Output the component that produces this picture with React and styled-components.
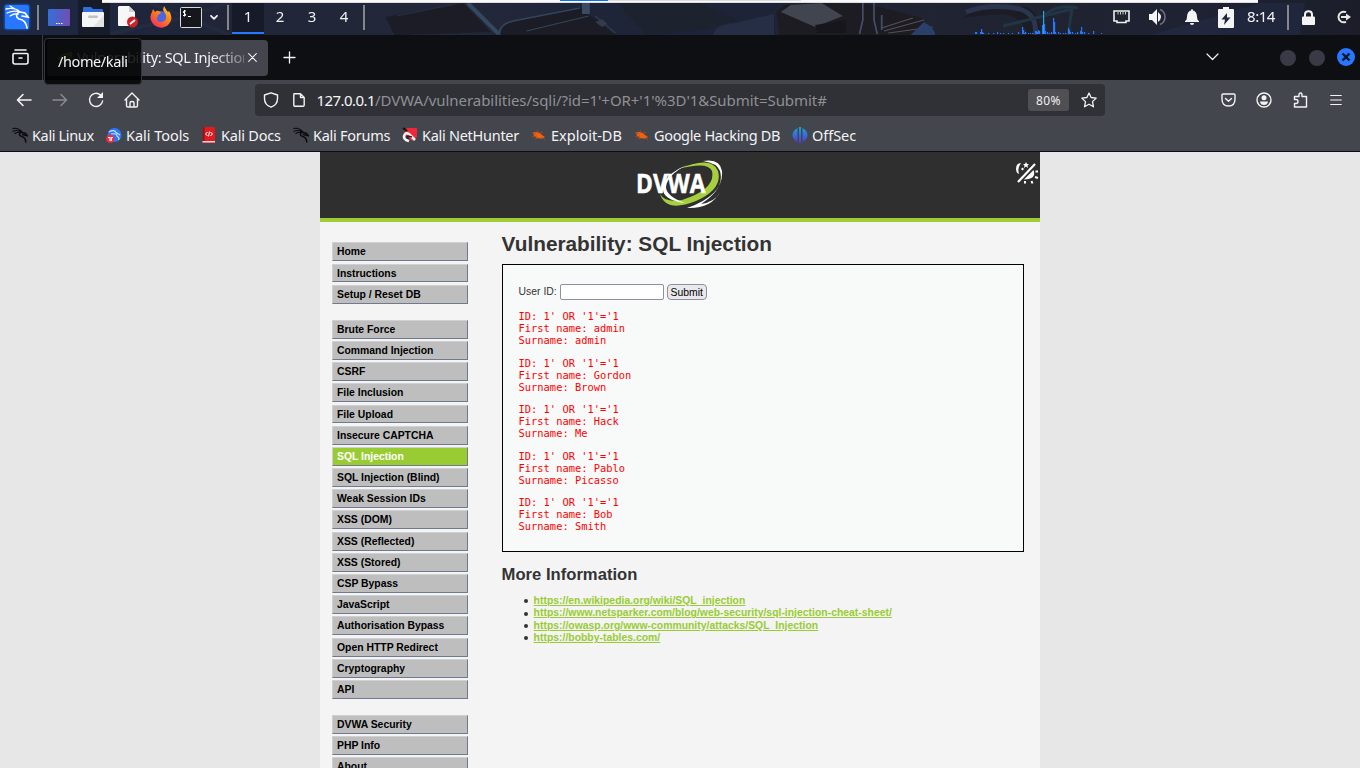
import React from "react";
import styled, { createGlobalStyle } from "styled-components";

const Global = createGlobalStyle`
  * { box-sizing: border-box; }
  html, body { margin: 0; padding: 0; overflow: hidden; background: #e7e7e7; }
  svg { display: block; flex: none; }
`;

const Desktop = styled.div`
  width: 1360px;
  height: 768px;
  overflow: hidden;
  display: flex;
  flex-direction: column;
  font-family: "Noto Sans", sans-serif;
  color: #f3f3f5;
`;

/* ---------- desktop panel ---------- */
const Panel = styled.header`
  position: relative;
  height: 35px;
  flex: none;
  display: flex;
  align-items: center;
  background: #1f2230;
`;
const Wallpaper = styled.svg`
  position: absolute;
  inset: 0;
`;
const Behind = styled.div`
  position: absolute;
  z-index: 2;
  left: 102px;
  top: 0;
  width: 1156px;
  height: 3px;
  background: #fafafa;
  border-bottom: 1px solid #dcdcde;
  display: flex;
  padding-left: 458px;
`;
const Loading = styled.div`
  width: ${(p) => p.$w}px;
  height: 1px;
  background: ${(p) => p.$c};
`;
const Launchers = styled.div`
  position: relative;
  display: flex;
  align-items: center;
  width: 366px;
  height: 35px;
`;
const Launcher = styled.div`
  width: ${(p) => p.$w}px;
  height: 35px;
  display: flex;
  align-items: center;
  justify-content: center;
  background: ${(p) => p.$bg || "transparent"};
`;
const ArrowSlot = styled(Launcher)`
  padding-right: 5px;
`;
const Divider = styled.div`
  width: 2px;
  height: 25px;
  background: #85868b;
`;
const Workspace = styled.div`
  width: 32px;
  height: 35px;
  padding-bottom: 3px;
  display: flex;
  align-items: center;
  justify-content: center;
  font-size: 15px;
  color: #f0f0f2;
  background: ${(p) => (p.$on ? "#171b29" : "transparent")};
  box-shadow: ${(p) => (p.$on ? "inset 0 -1px #171b29, inset 0 -3px #2777ff" : "none")};
`;
const Tray = styled.div`
  position: relative;
  margin-left: auto;
  width: 256px;
  height: 35px;
  display: flex;
  align-items: center;
`;
const TrayIcon = styled.div`
  width: ${(p) => p.$w}px;
  display: flex;
  justify-content: center;
`;
const Clock = styled.div`
  width: 42px;
  padding-right: 6px;
  text-align: center;
  font-size: 15px;
  line-height: 33px;
  margin-top: -2px;
  letter-spacing: -0.5px;
`;

/* ---------- browser ---------- */
const TabStrip = styled.div`
  position: relative;
  height: 45px;
  flex: none;
  display: flex;
  align-items: center;
  background: #0e0f13;
`;
const ViewButton = styled.div`
  width: 43px;
  height: 45px;
  display: flex;
  align-items: center;
  justify-content: center;
  padding-right: 2px;
  padding-bottom: 1px;
  border-right: 1px solid #3b3c40;
`;
const Tab = styled.div`
  margin-left: 4px;
  width: 221px;
  height: 36px;
  border-radius: 4px;
  background: #44464e;
  display: flex;
  align-items: center;
  padding-left: 10px;
  font-size: 14.5px;
`;
const TabTitle = styled.div`
  width: 167px;
  margin-left: 4px;
  margin-top: -1px;
  white-space: nowrap;
  overflow: hidden;
  letter-spacing: -0.33px;
  mask-image: linear-gradient(90deg, #000 80%, rgba(0, 0, 0, 0.3));
`;
const NewTab = styled.div`
  margin-left: 15px;
`;
const WindowControls = styled.div`
  margin-left: auto;
  display: flex;
  align-items: center;
  padding-right: 5px;
`;
const Round = styled.div`
  width: 16px;
  height: 16px;
  margin-right: 13px;
  border-radius: 50%;
  background: #383b46;
`;
const Tooltip = styled.div`
  position: absolute;
  left: 44px;
  top: 3px;
  width: 98px;
  height: 47px;
  z-index: 3;
  border: 1px solid #34353a;
  border-radius: 4px;
  background: rgba(2, 2, 3, 0.86);
  padding-left: 13px;
  line-height: 45px;
  font-size: 14.5px;
  letter-spacing: -0.4px;
`;
const NavBar = styled.div`
  height: 40px;
  flex: none;
  display: flex;
  align-items: center;
  background: #44464e;
`;
const NavIcon = styled.div`
  width: 36px;
  display: flex;
  align-items: center;
  height: 18px;
  justify-content: center;
  opacity: ${(p) => (p.$dim ? 0.4 : 1)};
`;
const NavGroup = styled.div`
  display: flex;
  padding-left: 6px;
  width: 255px;
`;
const UrlBar = styled.div`
  width: 850px;
  height: 32px;
  border-radius: 4px;
  background: #303136;
  display: flex;
  align-items: center;
  padding: 0 8px;
`;
const Url = styled.div`
  margin-left: 11.5px;
  flex: 1;
  font-size: 15px;
  line-height: 32px;
  white-space: nowrap;
  color: #8f9094;
  letter-spacing: -0.05px;
`;
const Host = styled.span`
  color: #f6f6f7;
  letter-spacing: -0.55px;
`;
const Zoom = styled.div`
  width: 41px;
  height: 22px;
  margin-right: 12px;
  border-radius: 3px;
  background: #504f54;
  text-align: center;
  font-size: 12px;
  letter-spacing: 0.4px;
  line-height: 23px;
  color: #f0f0f1;
`;
const MenuGroup = styled.div`
  margin-left: auto;
  padding-right: 6px;
  display: flex;
`;
const Bookmarks = styled.div`
  height: 32px;
  flex: none;
  padding-left: 12px;
  display: flex;
  align-items: center;
  background: #44464e;
  border-bottom: 1px solid #0d0e12;
`;
const Bookmark = styled.div`
  width: ${(p) => p.$w}px;
  display: flex;
  align-items: center;
  gap: 4px;
  font-size: 14.5px;
  line-height: 28px;
  padding-bottom: 1.5px;
  white-space: nowrap;
  letter-spacing: ${(p) => p.$ls}px;
`;

/* ---------- web page ---------- */
const Viewport = styled.main`
  height: 616px;
  flex: none;
  overflow: hidden;
  background: #e7e7e7;
  font-family: "Liberation Sans", Arial, sans-serif;
  font-size: 10.4px;
  color: #333;
`;
const Page = styled.div`
  width: 720px;
  height: 700px;
  margin: 0 auto;
  background: #f4f4f4;
`;
const Banner = styled.div`
  height: 70px;
  background: #2f2f2f;
  border-bottom: 4px solid #a1cc33;
  display: flex;
  justify-content: flex-end;
  align-items: flex-start;
`;
const Logo = styled.svg`
  margin: 6px 291px 0 0;
`;
const ThemeIcon = styled.svg`
  margin: 9px 1px 0 0;
`;
const Columns = styled.div`
  display: flex;
  padding-left: 12px;
`;
const Side = styled.nav`
  width: 136px;
  padding-top: 20.4px;
`;
const MenuBlock = styled.div`
  margin-bottom: 16.15px;
`;
const MenuItem = styled.div`
  height: 18.9px;
  margin-bottom: 2.3px;
  padding-left: 4px;
  border: 1px solid;
  border-color: #d0d0d0 #6f7990 #6f7990 #d0d0d0;
  background: ${(p) => (p.$on ? "#99cc33" : "#bebebe")};
  color: ${(p) => (p.$on ? "#fff" : "#000")};
  font-weight: bold;
  font-size: 10.4px;
  line-height: 17px;
`;
const Content = styled.section`
  margin-left: 33.6px;
  width: 522px;
`;
const H1 = styled.h1`
  margin: 10px 0 8px;
  font-size: 20.8px;
  line-height: 24px;
`;
const H2 = styled.h2`
  margin: 13px 0 10px;
  font-size: 16.64px;
  line-height: 20px;
`;
const VulnBox = styled.div`
  height: 288px;
  border: 1px solid #000;
  background: #f8fafa;
  padding: 19px 16px 0;
`;
const Form = styled.form`
  display: flex;
  align-items: center;
  height: 16px;
  margin-bottom: 10px;
`;
const Label = styled.label`
  line-height: 12px;
  padding-bottom: 1px;
`;
const Input = styled.input`
  width: 104px;
  height: 16px;
  margin: 0 3px;
  padding: 0;
  border: 1px solid #8f8f9d;
  border-radius: 2px;
  background: #fff;
`;
const Submit = styled.button`
  width: 40px;
  height: 16px;
  padding: 1px 0 0;
  border: 1px solid #8f8f9d;
  border-radius: 4px;
  background: #e9e9ed;
  color: #000;
  font: 10.4px/13px "Liberation Sans", Arial, sans-serif;
`;
const Result = styled.pre`
  margin: 0 0 10.4px;
  font: 10.4px/12.07px "DejaVu Sans Mono", monospace;
  color: #f00;
`;
const Links = styled.ul`
  margin: 0;
  padding-left: 22.5px;
  list-style: none;
`;
const LinkRow = styled.li`
  display: flex;
  align-items: center;
  gap: 5.5px;
  line-height: 12.4px;
  &::before {
    content: "";
    width: 4px;
    height: 4px;
    border-radius: 50%;
    background: #333;
  }
`;
const Link = styled.a`
  color: #99cc33;
  font-weight: bold;
  text-decoration: underline;
  letter-spacing: 0.01px;
`;

const Dragon = ({ size = 16, color = "#0b0b0d" }) => (
  <svg width={size} height={size} viewBox="0 0 16 16" fill="none" stroke={color} strokeLinecap="round">
    <path d="M.8 1.500C4 .8 7.500 2 9.600 4.600M.8 4.200C4.500 3 7.600 3.700 9.700 5.200M2.800 6.500C5.500 4.800 7.500 5 9 5.600" strokeWidth="1.100" />
    <path d="M9.600 5C6.500 6 6.600 8.800 9.600 9.400C12.300 9.900 13.500 11.300 13.800 15" strokeWidth="1.500" />
    <path d="M9.400 5.200L13.200 6.200L15.500 8.800L12.400 8L10.400 7.500" strokeWidth="1.500" />
  </svg>
);

const Spark = () => {
  const bars = [[975,2],[976,2],[980,2],[981,5],[982,2],[983,1],[988,1],[993,1],[997,2],[1000,1],[1003,1],[1008,1],[1012,1],[1018,2],[1022,7],[1023,4],[1024,1],[1025,2],[1028,1],[1030,1],[1032,1],[1035,3],[1036,3],[1037,2],[1038,4],[1039,3],[1042,9],[1043,23],[1044,10],[1045,3],[1047,2],[1049,1],[1051,2],[1053,16],[1054,12],[1055,2],[1058,2],[1060,1],[1063,1],[1065,1],[1068,6],[1069,4],[1070,2],[1072,2],[1075,1],[1077,2],[1080,3],[1081,7],[1082,2],[1084,2],[1088,1],[1093,3],[1101,1]];
  return bars.map(([x, h]) => <rect key={x} x={x} y={34 - h} width="1.2" height={h} fill={h > 20 ? "#25a8e8" : "#2777ff"} />);
};

const Backdrop = () => (
  <Wallpaper width="1360" height="35" viewBox="0 0 1360 35">
    <defs>
      <linearGradient id="sky">
        <stop offset="0" stopColor="#1d2843" />
        <stop offset=".15" stopColor="#202538" />
        <stop offset=".35" stopColor="#222739" />
        <stop offset=".5" stopColor="#1d2439" />
        <stop offset=".75" stopColor="#202330" />
        <stop offset=".88" stopColor="#1e2233" />
        <stop offset="1" stopColor="#1b1e29" />
      </linearGradient>
      <filter id="soft" x="-5%" y="-20%" width="110%" height="140%"><feGaussianBlur stdDeviation=".6" /></filter>
    </defs>
    <rect width="1360" height="35" fill="url(#sky)" />
    <g transform="translate(380) scale(1.11 1) translate(-380)" filter="url(#soft)">
      <path d="M385 17L455 3L480 32L400 35H393Z" fill="#1d1d27" />
      <path d="M395 16L448 4" stroke="#2b3042" />
      <path d="M459 3L487 34" stroke="#334861" strokeWidth="4" />
      <path d="M488 35Q486 25 500 21L560 7L592 35Z" fill="#1c1d27" />
      <path d="M488 35Q486 25 500 21L560 8" stroke="#32455c" strokeWidth="1.500" fill="none" />
      <path d="M512 31L568 16M574 16L592 33" stroke="#334457" fill="none" />
      <path d="M562 3H569V14H562Z" fill="#3a4c66" />
      <path d="M574 22L580 19L585 24L580 27Z" fill="#353a4a" />
      <path d="M594 3H667L702 20L670 30L620 35Z" fill="#1e202d" />
      <path d="M680 35Q682 24 700 23L735 14V35Z" fill="#29304a" opacity=".75" />
      <path d="M737 12L745 5L780 3L820 4L868 18L880 35H740Z" fill="#1e1c23" />
      <path d="M741 12L750 5L778 3L797 16L772 27Z" fill="#404450" />
      <path d="M772 25L800 20L800 33H774Z" fill="#18181e" />
      <path d="M815 3V20L812 34M825 3V20L828 34M832 15V30" stroke="#43506b" strokeWidth="1.500" fill="none" />
      <path d="M834 31L870 20M832 28L860 18M838 33L878 27" stroke="#55505a" />
      <path d="M870 22Q880 28 880 35H858Z" fill="#29406a" />
    </g>
    <g filter="url(#soft)">
      <path d="M965 17Q978 3 1026 7Q1042 15 1040 35H1028Q1022 15 1000 14Z" fill="#1b1c25" />
      <path d="M966 12Q990 3 1020 9Q1038 15 1035 35" stroke="#2c344f" strokeWidth="5" fill="none" />
      <path d="M1003 26L1072 9L1068 35M1045 14Q1060 4 1078 8" stroke="#203545" strokeWidth="3" fill="none" />
      <path d="M1150 35L1260 3H1305L1300 35Z" fill="#243052" opacity=".35" />
      <path d="M105 35L185 17L230 3M150 3L230 35" stroke="#303548" strokeWidth="4" opacity=".3" fill="none" />
    </g>
    <Spark />
  </Wallpaper>
);

const Firefox = () => (
  <svg width="22" height="22" viewBox="0 0 22 22" style={{ marginTop: -1, marginLeft: -1 }}>
    <defs>
      <linearGradient id="fx" x1="1" y1="0" x2=".3" y2="1">
        <stop offset="0" stopColor="#ffd83a" /><stop offset=".45" stopColor="#ff8a16" /><stop offset="1" stopColor="#f5315b" />
      </linearGradient>
    </defs>
    <circle cx="11" cy="12" r="7" fill="#4c65df" />
    <path d="M3 3L5 6Q7 4 9 5L11 7L8 9Q5 16 11 16Q17 16 16 9L13 4L14 0Q16 4 18 6L19 5Q24 12 19 18Q12 25 4 19Q-2 12 2 6Z" fill="url(#fx)" />
  </svg>
);

const stroke = { fill: "none", stroke: "#f3f3f5", strokeWidth: 1.4, strokeLinecap: "round", strokeLinejoin: "round" };

const DesktopPanel = () => (
  <Panel>
    <Backdrop />
    <Behind><Loading $w={48} $c="#0b72df" /><Loading $w={193} $c="#dcdcdc" /></Behind>
    <Launchers>
      <Launcher $w={37}>
        <svg width="30" height="30" viewBox="0 0 30 30" style={{ marginLeft: -3, marginTop: -1 }}>
          <rect x="1.500" y="1.500" width="27" height="27" rx="4" fill="#1455bd" opacity=".6" />
          <rect x="3" y="3" width="24" height="24" rx="2" fill="#2777ff" />
          <g fill="none" stroke="#fff" strokeLinecap="round">
            <path d="M4 7Q13 5 18 10M5 11Q12 8 17 10M8 14Q13 11 16 12M8 4L13 7" strokeWidth="1.300" />
            <path d="M17 10Q12 14 17 17Q24 18 25 26M18 10L23 11L26 15L20 14" strokeWidth="1.700" />
          </g>
        </svg>
      </Launcher>
      <Divider />
      <Launcher $w={39}>
        <svg width="22" height="17" viewBox="0 0 22 17" style={{ marginTop: -1 }}>
          <defs><linearGradient id="dk"><stop offset="0" stopColor="#3470d8" /><stop offset="1" stopColor="#724db4" /></linearGradient></defs>
          <rect width="22" height="17" rx="1" fill="url(#dk)" />
          <path d="M8 14.500h1.500M10.500 14.500h1.500M13 14.500h1.500" stroke="#fff" strokeWidth="1.200" />
        </svg>
      </Launcher>
      <Launcher $w={32} $bg="#171c2b">
        <svg width="22" height="20" viewBox="0 0 22 20" style={{ marginTop: -1, marginLeft: -2 }}>
          <path d="M1 1Q1 0 2 0H9L11 2H20Q21 2 21 3V8H1Z" fill="#2f6fe0" />
          <rect y="5" width="22" height="15" rx="1" fill="#f4f5f6" />
          <path d="M22 8V20H11Z" fill="#e2e2e2" />
          <rect x="6" y="8.500" width="10" height="2.500" rx="1.200" fill="#bfc0c2" />
        </svg>
      </Launcher>
      <Launcher $w={36}>
        <svg width="20" height="22" viewBox="0 0 20 22" style={{ marginTop: -1 }}>
          <path d="M1 0H11L17 6V20H1Q0 20 0 19V1Z" fill="#f7f7f7" /><path d="M11 0V6H17Z" fill="#d0d0d0" />
          <circle cx="14.500" cy="16" r="5.500" fill="#cf2027" /><path d="M12 18L17 14" stroke="#fff" strokeWidth="1.800" />
        </svg>
      </Launcher>
      <Launcher $w={31}><Firefox /></Launcher>
      <Launcher $w={28}>
        <svg width="22" height="21" viewBox="0 0 22 21" style={{ marginTop: -1 }}>
          <rect x=".5" y=".5" width="21" height="20" rx="1" fill="#15171c" stroke="#d9d9d9" />
          <path d="M6 4H4Q2.500 5.200 4 6.200Q6.500 7 5.500 8.500H3M4.500 3V9.500M8 9.500H11" fill="none" stroke="#fff" />
        </svg>
      </Launcher>
      <ArrowSlot $w={22}>
        <svg width="8" height="5" viewBox="0 0 8 5" style={{ marginTop: -1 }}><path {...stroke} strokeWidth="1.700" d="M1 .8L4 3.800L7 .8" /></svg>
      </ArrowSlot>
      <Divider />
      <Launcher $w={3} />
      {[1, 2, 3, 4].map((n) => <Workspace key={n} $on={n === 1}>{n}</Workspace>)}
      <Launcher $w={3} />
      <Divider />
    </Launchers>
    <Tray>
      <TrayIcon $w={34}>
        <svg width="17" height="14" viewBox="0 0 17 14" style={{ marginTop: -1 }}><path d="M1 1H16V11H13V12.500H4V11H1Z" fill="none" stroke="#f0f0f0" strokeWidth="1.600" /><path d="M5 2V4.500M7.500 2V4.500M10 2V4.500M12.500 2V4.500" stroke="#ccc" /></svg>
      </TrayIcon>
      <TrayIcon $w={37}>
        <svg width="18" height="18" viewBox="0 0 18 18" style={{ marginTop: -1 }}><path d="M1 6H4L9 1V17L4 12H1Z" fill="#f4f4f4" /><path d="M10 4Q16 9 10 14Z" fill="#f4f4f4" /><path d="M12 1.500Q17 3.500 17 9T12 16.500" fill="none" stroke="#70737d" strokeWidth="1.500" /></svg>
      </TrayIcon>
      <TrayIcon $w={34}>
        <svg width="14" height="16" viewBox="0 0 14 16" style={{ marginTop: -1 }}><path d="M7 0Q8 0 8 1.500Q12 2.500 12 8Q12 11 14 12V13H0V12Q2 11 2 8Q2 2.500 6 1.500Q6 0 7 0M5 14H9Q9 16 7 16T5 14" fill="#f4f4f4" /></svg>
      </TrayIcon>
      <TrayIcon $w={34}>
        <svg width="16" height="21" viewBox="0 0 16 21" style={{ marginTop: -1 }}><path d="M5 0H11V2H15Q16 2 16 3V20Q16 21 15 21H1Q0 21 0 20V3Q0 2 1 2H5Z" fill="#f4f4f4" /><path d="M9 6L3.500 12.500H7L6 18L12.500 10.500H9Z" fill="#20273a" /></svg>
      </TrayIcon>
      <Clock>8:14</Clock>
      <Launcher $w={2} />
      <Divider />
      <TrayIcon $w={39}>
        <svg width="13" height="15" viewBox="0 0 13 15" style={{ marginTop: -1 }}><path d="M3 7V4.500Q3 1.200 6.500 1.200T10 4.500V7" fill="none" stroke="#f4f4f4" strokeWidth="2" /><rect y="6.500" width="13" height="8.500" rx="1" fill="#f4f4f4" /></svg>
      </TrayIcon>
      <TrayIcon $w={30}>
        <svg width="15" height="14" viewBox="0 0 15 14" style={{ marginTop: -1 }}><path d="M10 2.200A5.300 5.300 0 1 0 10 11.800" fill="none" stroke="#e8e8e8" strokeWidth="2" /><path d="M5 7H11" stroke="#e8e8e8" strokeWidth="2" /><path d="M10 3.500L15 7L10 10.500Z" fill="#e8e8e8" /></svg>
      </TrayIcon>
    </Tray>
  </Panel>
);

const Bug = () => (
  <svg width="16" height="16" viewBox="0 0 16 16"><path d="M2 5.500Q8 4 11 8L14 10L11.500 11.500Q6 12 3 9Z" fill="#f0620f" /><path d="M1 6L5 7M1 10L6 9M4 12L7 11M6 3L7 6M9 5L12 6M11 10L14 13" stroke="#a94d1c" strokeWidth=".8" /></svg>
);
const icons = {
  dragon: <Dragon />,
  tools: <svg width="16" height="16" viewBox="0 0 16 16"><circle cx="8.500" cy="8" r="7" fill="#2777ff" /><path d="M3 5Q8 2 10 5.500L14 8M5 7Q11 6 11 9Q14 11 12.500 13" fill="none" stroke="#cfe0ff" strokeWidth="1.200" /><circle cx="4.300" cy="11.700" r="4.200" fill="#f02c3c" /><path d="M2 10.500H4V14M7 10.500H5.500V14" fill="none" stroke="#fff" strokeWidth="1.100" /></svg>,
  docs: <svg width="16" height="16" viewBox="0 0 16 16"><rect x="1.500" y="0" width="12.500" height="16" fill="#e01b1f" /><rect x="1.500" y="0" width="2" height="14" fill="#721d28" /><rect x="1.500" y="14" width="12.500" height="1.500" fill="#e8d5d5" /><path d="M6.500 5L4.500 7L6.500 9M8.500 4.500L7.500 9.500M9.500 5L11.500 7L9.500 9" fill="none" stroke="#fff" /></svg>,
  hunter: <svg width="16" height="16" viewBox="0 0 16 16"><path d="M5 1H15V10L10 14L2 6Z" fill="#ee2838" /><path d="M1 1L5 4" stroke="#111" strokeWidth="2" /><path d="M13 13L7 7Q4 5 2.500 8Q1 11 4 13L7 14" fill="none" stroke="#f7f3f3" strokeWidth="2.600" /><path d="M10 10L6 9Q4 10 7 12" fill="none" stroke="#351820" strokeWidth="1.300" /></svg>,
  bug: <Bug />,
  off: <svg width="16" height="16" viewBox="0 0 16 16"><defs><linearGradient id="os" x2="0" y2="1"><stop stopColor="#16a6d8" /><stop offset="1" stopColor="#5836cf" /></linearGradient></defs><path d="M5.500 1V15Q.5 12.500.5 8T5.500 1M7 0H9V16H7ZM10.500 1V15Q15.500 12.500 15.500 8T10.500 1" fill="url(#os)" /></svg>,
};
const bookmarks = [
  ["dragon", "Kali Linux", 94, -0.36], ["tools", "Kali Tools", 95, -0.04], ["docs", "Kali Docs", 92, -0.2], ["dragon", "Kali Forums", 109, -0.27],
  ["hunter", "Kali NetHunter", 129, -0.28], ["bug", "Exploit-DB", 103, 0], ["bug", "Google Hacking DB", 158, -0.33], ["off", "OffSec", 64, -0.05],
];

const Browser = () => (
  <>
    <TabStrip>
      <ViewButton>
        <svg width="17" height="16" viewBox="0 0 17 16"><path {...stroke} strokeWidth="1.600" d="M3 1H14M2 4.500H15Q16 4.500 16 5.500V13Q16 15 14 15H3Q1 15 1 13V5.500Q1 4.500 2 4.500M7 9H10" /></svg>
      </ViewButton>
      <Tab>
        <svg width="16" height="16" viewBox="0 0 16 16"><path d="M2 10Q3 4 14 3Q15 10 4 13M5 9L12 5" fill="none" stroke="#7fae35" strokeWidth="2" /></svg>
        <TabTitle>Vulnerability: SQL Injection</TabTitle>
        <svg width="9" height="9" viewBox="0 0 9 9" style={{ marginLeft: 3.5, marginTop: -1 }}><path {...stroke} strokeWidth="1.100" d="M.7.7L8.300 8.300M8.300.7L.7 8.300" /></svg>
      </Tab>
      <NewTab><svg width="13" height="13" viewBox="0 0 13 13"><path {...stroke} strokeWidth="1.300" d="M6.500 1V12M1 6.500H12" /></svg></NewTab>
      <WindowControls>
        <svg width="13" height="8" viewBox="0 0 13 8" style={{ marginRight: 61, marginTop: -1 }}><path {...stroke} strokeWidth="1.200" d="M1 1L6.500 6.500L12 1" /></svg>
        <Round /><Round />
        <svg width="18" height="18" viewBox="0 0 18 18" style={{ marginLeft: -1, marginTop: -1 }}><circle cx="9" cy="9" r="9" fill="#2777ff" /><path d="M5.500 5.500L12.500 12.500M12.500 5.500L5.500 12.500" stroke="#0d1526" strokeWidth="2.400" /></svg>
      </WindowControls>
      <Tooltip>/home/kali</Tooltip>
    </TabStrip>
    <NavBar>
      <NavGroup>
        <NavIcon><svg width="16" height="14" viewBox="0 0 16 14"><path {...stroke} strokeWidth="1.600" d="M15 7H1.500M7 1.500L1.500 7L7 12.500" /></svg></NavIcon>
        <NavIcon $dim><svg width="16" height="14" viewBox="0 0 16 14"><path {...stroke} d="M1 7H14.500M9 1.500L14.500 7L9 12.500" /></svg></NavIcon>
        <NavIcon><svg width="16" height="16" viewBox="0 0 16 16"><path {...stroke} d="M12.500 3A6.600 6.600 0 1 0 14.600 9" /><path d="M15 0V6H9Z" fill="#f3f3f5" /></svg></NavIcon>
        <NavIcon><svg width="16" height="16" viewBox="0 0 16 16"><path {...stroke} d="M1 8L8 1L15 8M2.500 7V13.500Q2.500 15 4 15H12Q13.500 15 13.500 13.500V7M6 15V11Q6 9.500 8 9.500T10 11V15" /></svg></NavIcon>
      </NavGroup>
      <UrlBar>
        <svg width="16" height="16" viewBox="0 0 16 16"><path {...stroke} d="M8 .8L14.500 3V6.500Q14.500 13 8 15.200Q1.500 13 1.500 6.500V3Z" /></svg>
        <svg width="12" height="14" viewBox="0 0 12 14" style={{ marginLeft: 14 }}><path {...stroke} d="M1.500.8H7.500L11.200 4.500V12Q11.200 13.200 10 13.200H2Q.8 13.200.8 12V1.500Q.8.8 1.500.8M7.500 1V4.500H11" /></svg>
        <Url><Host>127.0.0.1</Host>/DVWA/vulnerabilities/sqli/?id=1'+OR+'1'%3D'1&amp;Submit=Submit#</Url>
        <Zoom>80%</Zoom>
        <svg width="16" height="16" viewBox="0 0 16 16"><path {...stroke} strokeWidth="1.300" d="M8 1L10.100 5.500L15.200 6.100L11.500 9.600L12.500 14.800L8 12.200L3.500 14.800L4.500 9.600L.8 6.100L5.900 5.500Z" /></svg>
      </UrlBar>
      <MenuGroup>
        <NavIcon><svg width="15" height="14" viewBox="0 0 15 14"><path {...stroke} d="M2 1H13Q14 1 14 2V6Q14 13 7.500 13T1 6V2Q1 1 2 1M4.500 5.500L7.500 8.300L10.500 5.500" /></svg></NavIcon>
        <NavIcon><svg width="16" height="16" viewBox="0 0 16 16"><circle {...stroke} cx="8" cy="8" r="7" /><circle cx="8" cy="5.700" r="2.500" fill="#f3f3f5" /><path d="M4 9.500H12Q11.500 13 8 13T4 9.500" fill="#f3f3f5" /></svg></NavIcon>
        <NavIcon><svg width="15" height="16" viewBox="0 0 15 16"><path {...stroke} d="M1.500 15V11.500H3Q5 11.500 5 9.500T3 7.500H1.500V4.500H6V2.500Q6 1 7.500 1T9 2.500V4.500H13.500V15Z" /></svg></NavIcon>
        <NavIcon><svg width="12" height="12" viewBox="0 0 12 12"><path {...stroke} d="M.7 1.500H11.300M.7 6H11.300M.7 10.500H11.300" strokeWidth="1.200" /></svg></NavIcon>
      </MenuGroup>
    </NavBar>
    <Bookmarks>
      {bookmarks.map(([icon, label, w, ls]) => <Bookmark key={label} $w={w} $ls={ls}>{icons[icon]}{label}</Bookmark>)}
    </Bookmarks>
  </>
);

const menu = [
  ["Home", "Instructions", "Setup / Reset DB"],
  ["Brute Force", "Command Injection", "CSRF", "File Inclusion", "File Upload", "Insecure CAPTCHA", "SQL Injection", "SQL Injection (Blind)", "Weak Session IDs", "XSS (DOM)", "XSS (Reflected)", "XSS (Stored)", "CSP Bypass", "JavaScript", "Authorisation Bypass", "Open HTTP Redirect", "Cryptography", "API"],
  ["DVWA Security", "PHP Info", "About"],
];
const users = [["admin", "admin"], ["Gordon", "Brown"], ["Hack", "Me"], ["Pablo", "Picasso"], ["Bob", "Smith"]];
const links = [
  "https://en.wikipedia.org/wiki/SQL_injection",
  "https://www.netsparker.com/blog/web-security/sql-injection-cheat-sheet/",
  "https://owasp.org/www-community/attacks/SQL_Injection",
  "https://bobby-tables.com/",
];

const WebPage = () => (
  <Viewport>
    <Page>
      <Banner>
        <Logo width="88" height="52" viewBox="0 0 88 52">
          <path d="M42 11Q76-3 82 13Q87 31 60 43Q30 55 24 36Q29 45 46 42Q80 31 76 13Q72 3 42 11Z" fill="#a5cf3d" />
          <path d="M67 3Q84 0 86 13Q88 37 51 50Q75 51 84 34Q79 44 65 46Q89 31 84 13Q81 5 67 3Z" fill="#fff" />
          <path d="M51 7Q31 17 30 29Q30 38 49 45Q27 42 27 31Q27 17 51 7Z" fill="#fff" />
          <text x="0" y="35" fill="#fff" stroke="#fff" strokeWidth=".5" fontFamily="Open Sans, sans-serif" fontWeight="700" fontSize="26" textLength="69.500" lengthAdjust="spacingAndGlyphs">DVWA</text>
        </Logo>
        <ThemeIcon width="24" height="24" viewBox="0 0 24 24">
          <path d="M6 2Q1 2 1 8Q1 12 4 13Q3 10 3.500 7.500T6 2M11 1L12 3L14 3L12.500 4.500L13 7L11 5.500L9 7L9.500 4.500L8 3H10ZM7.500 6.500L9 8L7.500 9.500L6 8Z" fill="#fff" />
          <path d="M20 3L3 21" stroke="#fff" strokeWidth="2.200" />
          <path d="M18.500 9Q22 18 9 18.500Z" fill="#fff" />
          <path d="M20.500 10.500H23M20 16L23 17M16.500 20L17.500 22.500M10 20V22.500" stroke="#fff" strokeWidth="2" />
        </ThemeIcon>
      </Banner>
      <Columns>
        <Side>
          {menu.map((group) => (
            <MenuBlock key={group[0]}>
              {group.map((label) => <MenuItem key={label} $on={label === "SQL Injection"}>{label}</MenuItem>)}
            </MenuBlock>
          ))}
        </Side>
        <Content>
          <H1>Vulnerability: SQL Injection</H1>
          <VulnBox>
            <Form onSubmit={(e) => e.preventDefault()}>
              <Label>User ID:</Label><Input type="text" /><Submit>Submit</Submit>
            </Form>
            {users.map(([first, last]) => (
              <Result key={first}>{`ID: 1' OR '1'='1\nFirst name: ${first}\nSurname: ${last}`}</Result>
            ))}
          </VulnBox>
          <H2>More Information</H2>
          <Links>{links.map((l) => <LinkRow key={l}><Link>{l}</Link></LinkRow>)}</Links>
        </Content>
      </Columns>
    </Page>
  </Viewport>
);

export default function App() {
  return (
    <>
      <Global />
      <Desktop>
        <DesktopPanel />
        <Browser />
        <WebPage />
      </Desktop>
    </>
  );
}
